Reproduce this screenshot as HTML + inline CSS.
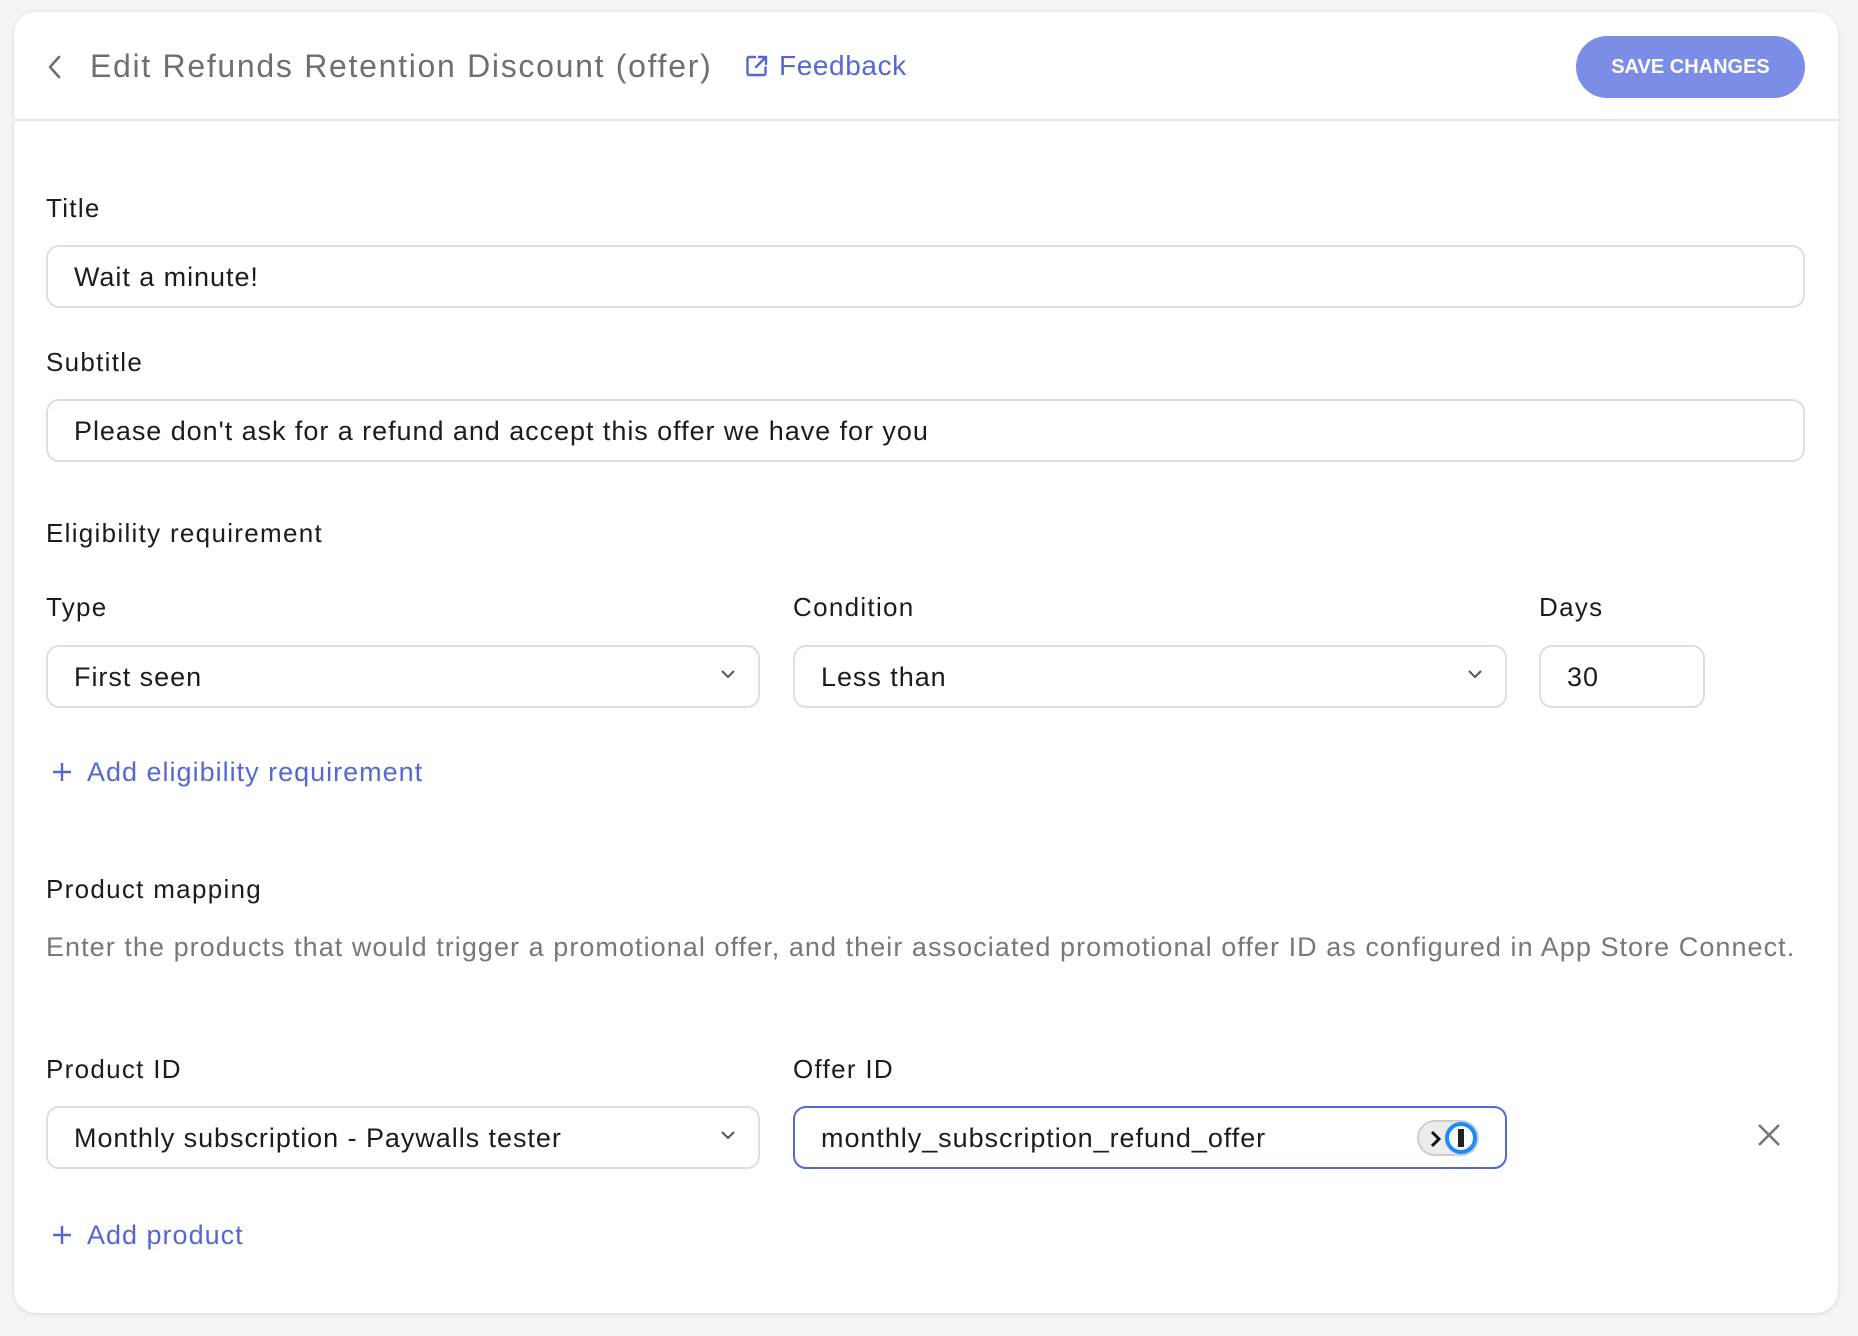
<!DOCTYPE html>
<html><head><meta charset="utf-8"><style>
*{box-sizing:border-box;margin:0;padding:0}
body{width:1858px;height:1336px;background:#f4f4f5;font-family:"Liberation Sans",sans-serif;color:#1c1c1e;position:relative;overflow:hidden;letter-spacing:1px}
.card{position:absolute;left:14px;top:12px;width:1824px;height:1301px;background:#fff;border-radius:22px;box-shadow:0 1px 4px rgba(0,0,0,.12)}
.hdr{position:absolute;left:0;top:0;right:0;height:109px;border-bottom:2px solid #e4e4e6}
.abs{position:absolute}
.lbl{position:absolute;font-size:26px;line-height:30px;color:#1c1c1e;letter-spacing:1.3px}
.inp{position:absolute;border:2px solid #dedee0;border-radius:13px;height:63px;font-size:27px;line-height:61px;padding-left:26px;color:#1c1c1e;letter-spacing:0.95px}
.chev{position:absolute;right:22px;top:22px}
.link{position:absolute;color:#5468d4;font-size:27px;line-height:30px;letter-spacing:1px}
</style></head><body>
<div class="card">
<div class="hdr">
<svg class="abs" style="left:32px;top:42px" width="16" height="26" viewBox="0 0 16 26"><path d="M13 3 L4 13 L13 23" fill="none" stroke="#6f6f6f" stroke-width="2.6" stroke-linecap="round" stroke-linejoin="round"/></svg>
<div class="abs" style="left:76px;top:35px;font-size:32px;line-height:38px;color:#6f6f6f;letter-spacing:1.7px">Edit Refunds Retention Discount (offer)</div>
<svg class="abs" style="left:731px;top:42px" width="24" height="24" viewBox="0 0 24 24"><path d="M10 3H4a1.5 1.5 0 0 0-1.5 1.5v15A1.5 1.5 0 0 0 4 21h15a1.5 1.5 0 0 0 1.5-1.5v-6M14 3h7v7M21 3L11 13" fill="none" stroke="#5468d4" stroke-width="2.4" stroke-linecap="round" stroke-linejoin="round"/></svg>
<div class="link" style="left:765px;top:39px;font-size:28px;letter-spacing:0.6px">Feedback</div>
<div class="abs" style="left:1562px;top:24px;width:229px;height:62px;border-radius:31px;background:#7b8de6;color:#fff;font-weight:bold;font-size:20px;line-height:62px;text-align:center;letter-spacing:0">SAVE CHANGES</div>
</div>
<div class="lbl" style="left:32px;top:181px">Title</div>
<div class="inp" style="left:32px;top:233px;width:1759px">Wait a minute!</div>
<div class="lbl" style="left:32px;top:335px">Subtitle</div>
<div class="inp" style="left:32px;top:387px;width:1759px">Please don't ask for a refund and accept this offer we have for you</div>
<div class="lbl" style="left:32px;top:506px">Eligibility requirement</div>
<div class="lbl" style="left:32px;top:580px">Type</div>
<div class="lbl" style="left:779px;top:580px">Condition</div>
<div class="lbl" style="left:1525px;top:580px">Days</div>
<div class="inp" style="left:32px;top:633px;width:714px">First seen<svg class="chev" width="16" height="10" viewBox="0 0 16 10"><path d="M2 2l6 6 6-6" fill="none" stroke="#555" stroke-width="2"/></svg></div>
<div class="inp" style="left:779px;top:633px;width:714px">Less than<svg class="chev" width="16" height="10" viewBox="0 0 16 10"><path d="M2 2l6 6 6-6" fill="none" stroke="#555" stroke-width="2"/></svg></div>
<div class="inp" style="left:1525px;top:633px;width:166px">30</div>
<svg class="abs" style="left:37px;top:749px" width="22" height="22" viewBox="0 0 22 22"><path d="M11 2v18M2 11h18" stroke="#5468d4" stroke-width="2.4"/></svg>
<div class="link" style="left:73px;top:745px">Add eligibility requirement</div>
<div class="lbl" style="left:32px;top:862px">Product mapping</div>
<div class="lbl" style="left:32px;top:920px;color:#787878;font-size:27px;letter-spacing:1.05px;white-space:nowrap">Enter the products that would trigger a promotional offer, and their associated promotional offer ID as configured in App Store Connect.</div>
<div class="lbl" style="left:32px;top:1042px">Product ID</div>
<div class="lbl" style="left:779px;top:1042px">Offer ID</div>
<div class="inp" style="left:32px;top:1094px;width:714px">Monthly subscription - Paywalls tester<svg class="chev" width="16" height="10" viewBox="0 0 16 10"><path d="M2 2l6 6 6-6" fill="none" stroke="#555" stroke-width="2"/></svg></div>
<div class="inp" style="left:779px;top:1094px;width:714px;border-color:#5468d4">monthly_subscription_refund_offer
<div class="abs" style="left:622px;top:12px;width:62px;height:36px;border-radius:18px;background:#ececec;border:2px solid #ccc"></div>
<svg class="abs" style="left:634px;top:22px" width="14" height="18" viewBox="0 0 14 18"><path d="M3 2l7 7-7 7" fill="none" stroke="#111" stroke-width="3"/></svg>
<div class="abs" style="left:650px;top:14px;width:32px;height:32px;border-radius:50%;background:#fff;border:4px solid #1a8cff"></div>
<div class="abs" style="left:663px;top:21px;width:6px;height:18px;background:#222"></div>
</div>
<svg class="abs" style="left:1743px;top:1111px" width="24" height="24" viewBox="0 0 24 24"><path d="M2 2l20 20M22 2L2 22" stroke="#777" stroke-width="2.6"/></svg>
<svg class="abs" style="left:37px;top:1212px" width="22" height="22" viewBox="0 0 22 22"><path d="M11 2v18M2 11h18" stroke="#5468d4" stroke-width="2.4"/></svg>
<div class="link" style="left:73px;top:1208px">Add product</div>
</div>
</body></html>
